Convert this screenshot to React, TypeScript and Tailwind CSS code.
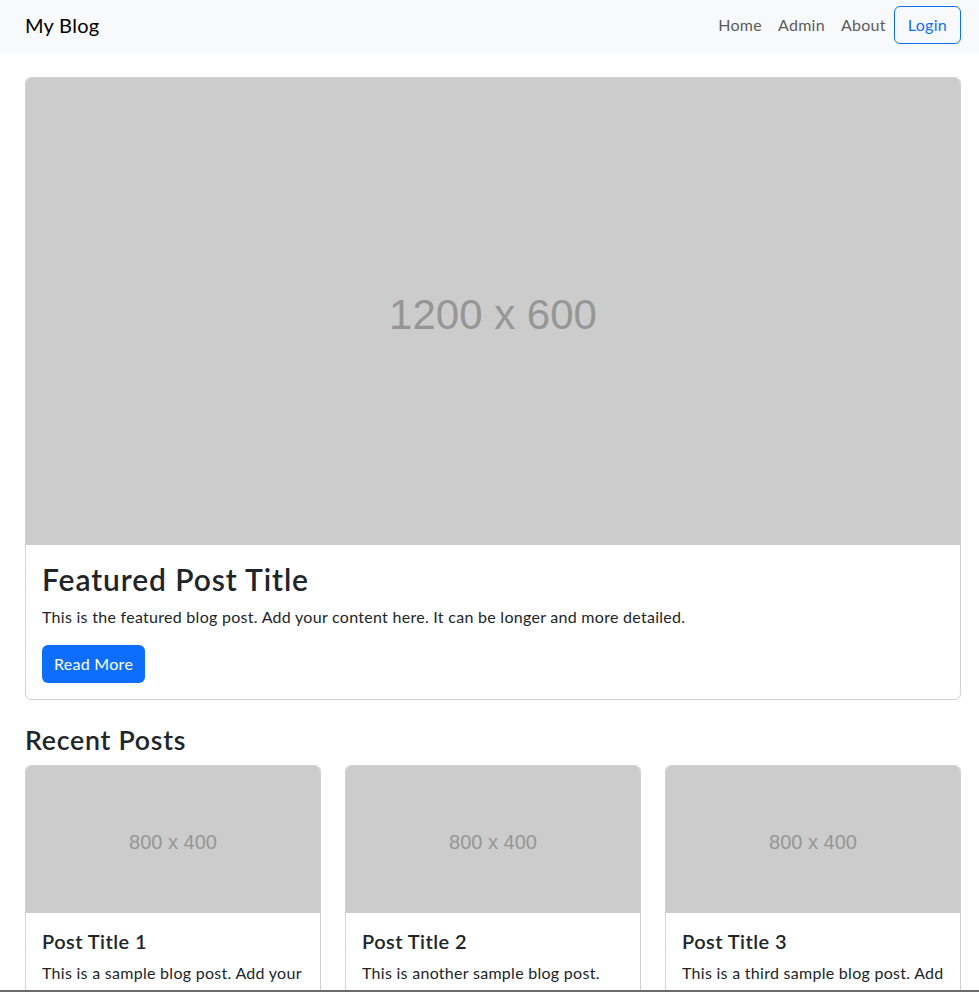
import React from 'react';

const posts = [
  { title: 'Post Title 1', text: 'This is a sample blog post. Add your content here.' },
  { title: 'Post Title 2', text: 'This is another sample blog post. Add your content here.' },
  { title: 'Post Title 3', text: 'This is a third sample blog post. Add your content here.' },
];

const Placeholder = ({ label, className }: { label: string; className: string }) => (
  <div className={`flex items-center justify-center bg-[#cccccc] text-[#969696] tracking-normal font-['Liberation_Sans',Arial,sans-serif] ${className}`}>
    {label}
  </div>
);

const App = () => {
  return (
    <div className="min-h-screen bg-white text-[#212529] font-['Lato','Noto_Sans',sans-serif] text-base leading-6 tracking-[0.28px]">
      <nav className="bg-[#f8f9fa] h-[53px]">
        <div className="ml-[25px] w-[936px] h-full pb-1 flex items-center justify-between">
          <a href="#" className="text-xl text-black">My Blog</a>
          <div className="flex items-center">
            <a href="#" className="px-2 text-[#5c5c5c]">Home</a>
            <a href="#" className="px-2 text-[#5c5c5c]">Admin</a>
            <a href="#" className="px-2 text-[#5c5c5c]">About</a>
            <button className="h-[38px] px-[13px] rounded-md border border-[#0d6efd] text-[#0d6efd]">Login</button>
          </div>
        </div>
      </nav>

      <main className="ml-[25px] w-[936px] pt-6">
        <div className="border border-[#d2d2d2] rounded-md overflow-hidden">
          <Placeholder label="1200 x 600" className="h-[467px] pt-[7px] text-[42px]" />
          <div className="p-4">
            <h2 className="text-[30px] leading-[36px] font-semibold tracking-[0.9px] mb-2">Featured Post Title</h2>
            <p className="mb-4">This is the featured blog post. Add your content here. It can be longer and more detailed.</p>
            <button className="h-[38px] px-3 rounded-md bg-[#0d6efd] text-white">Read More</button>
          </div>
        </div>

        <h3 className="mt-6 mb-[9px] text-[26.7px] leading-8 font-semibold tracking-[0.75px]">Recent Posts</h3>

        <div className="grid grid-cols-3 gap-6">
          {posts.map((p) => (
            <div key={p.title} className="border border-[#d2d2d2] rounded-md overflow-hidden">
              <Placeholder label="800 x 400" className="h-[147px] pt-[5px] text-[20px]" />
              <div className="p-4">
                <h5 className="text-xl leading-6 font-semibold tracking-[0.45px] mb-2">{p.title}</h5>
                <p className="mb-4">{p.text}</p>
                <button className="h-[38px] px-3 rounded-md bg-[#0d6efd] text-white">Read More</button>
              </div>
            </div>
          ))}
        </div>
      </main>

      <div className="fixed bottom-0 left-0 right-0 h-[2px] bg-[#6a6a6a]" />
    </div>
  );
};

export default App;
